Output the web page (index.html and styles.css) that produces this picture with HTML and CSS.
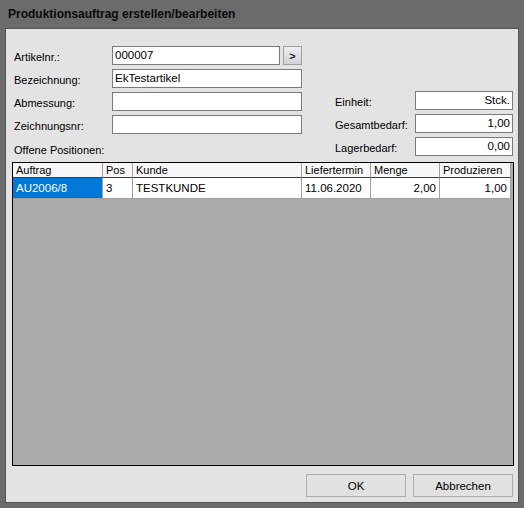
FILE: index.html
```html
<!DOCTYPE html>
<html lang="de">
<head>
    <meta charset="UTF-8">
    <meta name="viewport" content="width=device-width, initial-scale=1.0">
    <title>Produktionsauftrag erstellen/bearbeiten</title>
    <link rel="stylesheet" href="styles.css">
</head>
<body>
    <div class="window">
        <div class="titlebar">Produktionsauftrag erstellen/bearbeiten</div>
        <div class="client">
            <div class="form">
                <div class="fields left">
                    <span class="label">Artikelnr.:</span>
                    <div class="combo">
                        <div class="input">000007</div>
                        <button class="pick">&gt;</button>
                    </div>
                    <span class="label">Bezeichnung:</span>
                    <div class="input">EkTestartikel</div>
                    <span class="label">Abmessung:</span>
                    <div class="input"></div>
                    <span class="label">Zeichnungsnr:</span>
                    <div class="input"></div>
                    <span class="label wide">Offene Positionen:</span>
                </div>
                <div class="fields right">
                    <span class="label">Einheit:</span>
                    <div class="input num">Stck.</div>
                    <span class="label">Gesamtbedarf:</span>
                    <div class="input num">1,00</div>
                    <span class="label">Lagerbedarf:</span>
                    <div class="input num">0,00</div>
                </div>
            </div>

            <div class="grid">
                <table>
                    <thead>
                        <tr>
                            <th class="c-auftrag">Auftrag</th>
                            <th class="c-pos">Pos</th>
                            <th class="c-kunde">Kunde</th>
                            <th class="c-datum">Liefertermin</th>
                            <th class="c-menge">Menge</th>
                            <th class="c-prod">Produzieren</th>
                        </tr>
                    </thead>
                    <tbody>
                        <tr>
                            <td class="selected">AU2006/8</td>
                            <td>3</td>
                            <td>TESTKUNDE</td>
                            <td>11.06.2020</td>
                            <td class="num">2,00</td>
                            <td class="num">1,00</td>
                        </tr>
                    </tbody>
                </table>
            </div>

            <div class="actions">
                <button class="btn">OK</button>
                <button class="btn">Abbrechen</button>
            </div>
        </div>
    </div>
</body>
</html>
```

FILE: styles.css
```css
body {
    margin: 0;
    padding: 0;
    background: #6b6b6b;
    font-family: "Liberation Sans", Arial, sans-serif;
    font-size: 11px;
    color: #000;
}

.window {
    width: 524px;
    height: 508px;
    padding: 0 5px 5px 5px;
    box-sizing: border-box;
}

.titlebar {
    height: 28px;
    line-height: 28px;
    padding-left: 3px;
    font-weight: bold;
    font-size: 12px;
    color: #0a0a0a;
}

.client {
    height: 475px;
    box-sizing: border-box;
    border: 1px solid #555;
    background: #e3e3e3;
    display: flex;
    flex-direction: column;
}

/* upper form */
.form {
    height: 133px;
    display: flex;
    padding: 17px 0 0 8px;
    box-sizing: border-box;
}

.fields {
    display: grid;
    row-gap: 4px;
    grid-auto-rows: 19px;
    align-items: center;
}

.left {
    grid-template-columns: 98px 190px;
}

.right {
    grid-template-columns: 80px 98px;
    margin: 45px 0 0 33px;
}

.label {
    padding-top: 3px;
    white-space: nowrap;
}

.label.wide {
    grid-column: 1 / 3;
    padding-top: 4px;
}

.input {
    height: 19px;
    box-sizing: border-box;
    border: 1px solid #7a7a7a;
    background: #fff;
    padding: 0 2px;
    line-height: 16px;
    font-size: 11.5px;
}

.input.num {
    text-align: right;
}

.combo {
    display: flex;
    gap: 3px;
}

.combo .input {
    flex: 1;
}

.pick {
    width: 19px;
    height: 19px;
    padding: 0;
    border: 1px solid #a0a0a0;
    background: linear-gradient(#f0f0f0, #d2d2d2);
    font-family: inherit;
    font-size: 11px;
    font-weight: bold;
    color: #1a1a40;
}

/* positions grid */
.grid {
    margin-left: 6px;
    width: 502px;
    height: 304px;
    box-sizing: border-box;
    border: 1px solid #000;
    background: #ababab;
}

table {
    border-collapse: separate;
    border-spacing: 0;
    table-layout: fixed;
    width: 498px;
}

th, td {
    padding: 0 0 0 3px;
    border-right: 1px solid #a0a0a0;
    border-bottom: 1px solid #a0a0a0;
    text-align: left;
    font-weight: normal;
    white-space: nowrap;
    overflow: hidden;
}

th {
    height: 14px;
    line-height: 14px;
    background: #f7f7f7;
    font-size: 11px;
    border-bottom-color: #3c3c3c;
}

td {
    height: 20px;
    background: #fff;
    font-size: 11.5px;
}

td.num {
    text-align: right;
    padding: 0 3px 0 0;
}

td.selected {
    background: #0078d7;
    color: #fff;
}

.c-auftrag { width: 86px; }
.c-pos { width: 26px; }
.c-kunde { width: 165px; }
.c-datum { width: 65px; }
.c-menge { width: 65px; }
.c-prod { width: 67px; }

/* dialog buttons */
.actions {
    display: flex;
    justify-content: flex-end;
    gap: 7px;
    padding: 8px 5px 0 0;
}

.btn {
    width: 100px;
    height: 23px;
    border: 1px solid #adadad;
    background: #e1e1e1;
    font-family: inherit;
    font-size: 11.5px;
    color: #000;
}
```
